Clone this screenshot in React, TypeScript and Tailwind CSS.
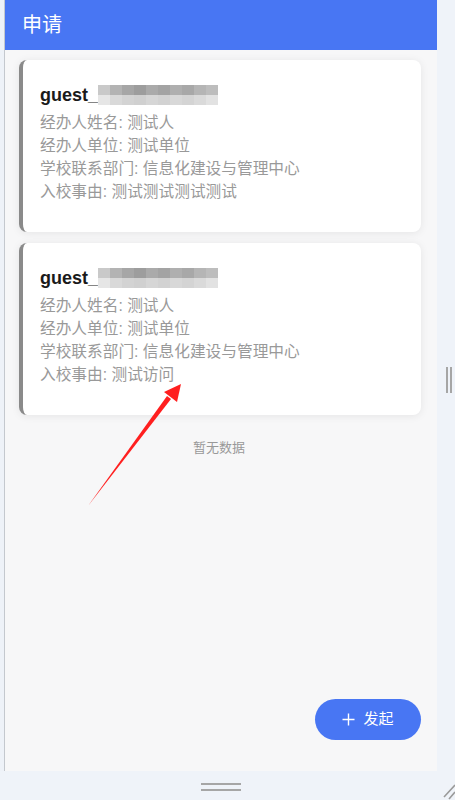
import React from "react";

const FONT = '"Liberation Sans", "Noto Sans CJK SC", sans-serif';

const mosaicTop = ["#c9c9c9", "#b3b3b3", "#a6a6a6", "#9d9d9d", "#aaaaaa", "#a3a3a3", "#afafaf", "#a8a8a8", "#b5b5b5", "#bdbdbd"];
const mosaicBottom = ["#e6e6e6", "#d9d9d9", "#d3d3d3", "#d0d0d0", "#d6d6d6", "#d2d2d2", "#d8d8d8", "#d4d4d4", "#dadada", "#e2e2e2"];

function Mosaic() {
  return (
    <div className="flex flex-col">
      <div className="flex">
        {mosaicTop.map((c, i) => (
          <div key={i} className="w-[12px] h-[10px]" style={{ background: c }} />
        ))}
      </div>
      <div className="flex">
        {mosaicBottom.map((c, i) => (
          <div key={i} className="w-[12px] h-[10px]" style={{ background: c }} />
        ))}
      </div>
    </div>
  );
}

function Card({ reason }: { reason: string }) {
  return (
    <div className="bg-white rounded-lg border-l-4 border-[#8a8a8a] shadow-[0_1px_8px_rgba(0,0,0,0.08)] pl-[17px] pt-[22px] pb-[29px]">
      <div className="flex items-center h-[26px]">
        <span className="text-[18px] font-semibold text-[#1a1a1a] leading-[26px]">guest_</span>
        <Mosaic />
      </div>
      <div className="mt-[3px] text-[15.7px] leading-[23px] text-[#999999]">
        <div>经办人姓名: 测试人</div>
        <div>经办人单位: 测试单位</div>
        <div>学校联系部门: 信息化建设与管理中心</div>
        <div>入校事由: {reason}</div>
      </div>
    </div>
  );
}

export default function App() {
  return (
    <div className="w-[455px] h-[800px] bg-[#eff3f9] flex flex-col relative overflow-hidden" style={{ fontFamily: FONT }}>
      <div className="flex h-[771px]">
        <div className="w-[5px] border-r border-[#c4c8ce] bg-[#eef2f8]" />
        <div className="w-[432px] flex flex-col bg-[#f7f7f8] relative">
          <div className="h-[50px] bg-[#4876f3] text-white text-[20px] pl-[17px] flex items-center">申请</div>
          <div className="flex-1 pt-[10px] pl-[14px] pr-[16px] flex flex-col">
            <div className="flex flex-col gap-[11px]">
              <Card reason="测试测试测试测试" />
              <Card reason="测试访问" />
            </div>
            <div className="mt-[23px] text-center text-[13px] text-[#999999] pr-[2px]">暂无数据</div>
          </div>
          <div className="absolute right-[16px] bottom-[31px] w-[106px] h-[41px] rounded-full bg-[#4876f3] text-white text-[15px] flex items-center justify-center gap-[8px]">
            <svg width="13" height="13" viewBox="0 0 13 13">
              <path d="M6.5 0.5v12M0.5 6.5h12" stroke="white" strokeWidth="1.4" />
            </svg>
            <span>发起</span>
          </div>
        </div>
        <div className="flex-1 flex items-center justify-center pb-[11px] pl-[6px]">
          <div className="flex gap-[2px]">
            <div className="w-[2px] h-[26px] bg-[#a6a6a6]" />
            <div className="w-[2px] h-[26px] bg-[#a6a6a6]" />
          </div>
        </div>
      </div>
      <div className="flex-1 flex">
        <div className="w-[437px] flex flex-col items-center pt-[12px] gap-[4px] pl-[5px]">
          <div className="w-[40px] h-[2px] bg-[#a6a6a6]" />
          <div className="w-[40px] h-[2px] bg-[#a6a6a6]" />
        </div>
      </div>
      <svg className="absolute left-0 top-0 pointer-events-none" width="455" height="800" viewBox="0 0 455 800">
        <polygon points="88,506 171,399 167,396" fill="#ff1f1f" />
        <polygon points="181,384 177,402 164,392" fill="#ff1f1f" />
        <path d="M444 797 L455 785 M449 799 L455 792" stroke="#9a9a9a" strokeWidth="1.6" />
      </svg>
    </div>
  );
}
